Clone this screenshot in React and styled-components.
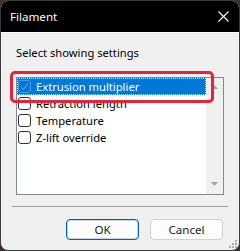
import React from 'react';
import styled, { createGlobalStyle } from 'styled-components';

const GlobalStyle = createGlobalStyle`
  html, body {
    margin: 0;
    padding: 0;
    background: #3b3022;
  }
  body {
    font-family: "Noto Sans", "Liberation Sans", sans-serif;
  }
`;

const Window = styled.div`
  position: relative;
  width: 240px;
  height: 251px;
  box-sizing: border-box;
  border-radius: 8px;
  overflow: hidden;
  border: 1px solid #3a3a3a;
  background: #f0f0f0;
  display: flex;
  flex-direction: column;
`;

const TitleBar = styled.div`
  height: 31px;
  flex: none;
  background: #000;
  display: flex;
  align-items: center;
  justify-content: space-between;
  padding: 0 10px 0 9px;
  color: #fff;
  font-size: 11.6px;
  border-bottom: 1px solid #fafafa;
`;

const Body = styled.div`
  flex: 1;
  display: flex;
  flex-direction: column;
  padding: 12px 15px 0 15px;
  color: #000;
  font-size: 11.2px;
`;

const Label = styled.div`
  line-height: 16px;
  margin-bottom: 16px;
`;

const ListWrap = styled.div`
  position: relative;
  height: 118px;
  box-sizing: border-box;
  border: 1px solid #828790;
  background: #fff;
  display: flex;
`;

const Rows = styled.div`
  flex: 1;
  display: flex;
  flex-direction: column;
`;

const Row = styled.div`
  height: 17px;
  display: flex;
  align-items: center;
  gap: 5px;
  padding-left: 1px;
  box-sizing: border-box;
  background: ${p => (p.$selected ? '#0078d7' : 'transparent')};
  color: ${p => (p.$selected ? '#fff' : '#000')};
  outline: ${p => (p.$selected ? '1px dotted #c8dff5' : 'none')};
  outline-offset: -1px;
  white-space: nowrap;
`;

const Box = styled.span`
  width: 13px;
  height: 13px;
  flex: none;
  box-sizing: border-box;
  border: 1px solid ${p => (p.$selected ? '#4d9de0' : '#333')};
  border-radius: 3px;
  background: ${p => (p.$selected ? 'transparent' : '#fff')};
  display: flex;
  align-items: center;
  justify-content: center;
`;

const Scroll = styled.div`
  width: 17px;
  flex: none;
  background: #f0f0f0;
  display: flex;
  flex-direction: column;
  justify-content: space-between;
  align-items: center;
  padding: 7px 0 8px;
  box-sizing: border-box;
`;

const Highlight = styled.div`
  position: absolute;
  left: -7px;
  top: -7px;
  width: 204px;
  height: 32px;
  box-sizing: border-box;
  border: 3px solid #e3243b;
  border-radius: 5px;
  pointer-events: none;
`;

const Separator = styled.div`
  height: 1px;
  background: #a0a0a0;
  margin: 11px -4px 0;
`;

const Buttons = styled.div`
  display: flex;
  justify-content: flex-end;
  gap: 11px;
  margin-top: 12px;
  padding-right: 1px;
`;

const Button = styled.button`
  width: 73px;
  height: 21px;
  box-sizing: border-box;
  border-radius: 4px;
  font-family: inherit;
  font-size: 11.6px;
  color: #1a1a1a;
  background: #fdfdfd;
  border: 1px solid ${p => (p.$primary ? '#005fb8' : '#d0d0d0')};
  box-shadow: ${p => (p.$primary ? 'inset 0 0 0 1px rgba(0,95,184,0.25)' : 'none')};
  padding: 0;
`;

const Grip = styled.svg`
  position: absolute;
  right: 2px;
  bottom: 2px;
`;

const items = ['Extrusion multiplier', 'Retraction length', 'Temperature', 'Z-lift override'];

export default function App() {
  return (
    <>
      <GlobalStyle />
      <Window>
        <TitleBar>
          <span>Filament</span>
          <svg width="11" height="11" viewBox="0 0 11 11">
            <path d="M0.5 0.5 L10.5 10.5 M10.5 0.5 L0.5 10.5" stroke="#fff" strokeWidth="1.1" />
          </svg>
        </TitleBar>
        <Body>
          <Label>Select showing settings</Label>
          <ListWrap>
            <Rows>
              {items.map((t, i) => (
                <Row key={t} $selected={i === 0}>
                  <Box $selected={i === 0}>
                    {i === 0 && (
                      <svg width="9" height="9" viewBox="0 0 9 9">
                        <path d="M1 5 L3.5 7.5 L8 1.5" fill="none" stroke="#6fb2ec" strokeWidth="1" />
                      </svg>
                    )}
                  </Box>
                  {t}
                </Row>
              ))}
            </Rows>
            <Scroll>
              <svg width="7" height="4" viewBox="0 0 7 4"><path d="M3.5 0 L7 4 L0 4 Z" fill="#a3a3a3" /></svg>
              <svg width="7" height="4" viewBox="0 0 7 4"><path d="M0 0 L7 0 L3.5 4 Z" fill="#a3a3a3" /></svg>
            </Scroll>
            <Highlight />
          </ListWrap>
          <Separator />
          <Buttons>
            <Button $primary>OK</Button>
            <Button>Cancel</Button>
          </Buttons>
        </Body>
        <Grip width="8" height="8" viewBox="0 0 8 8">
          <g fill="#b0b0b0">
            <rect x="6" y="0" width="2" height="2" />
            <rect x="3" y="3" width="2" height="2" />
            <rect x="6" y="3" width="2" height="2" />
            <rect x="0" y="6" width="2" height="2" />
            <rect x="3" y="6" width="2" height="2" />
            <rect x="6" y="6" width="2" height="2" />
          </g>
        </Grip>
      </Window>
    </>
  );
}
